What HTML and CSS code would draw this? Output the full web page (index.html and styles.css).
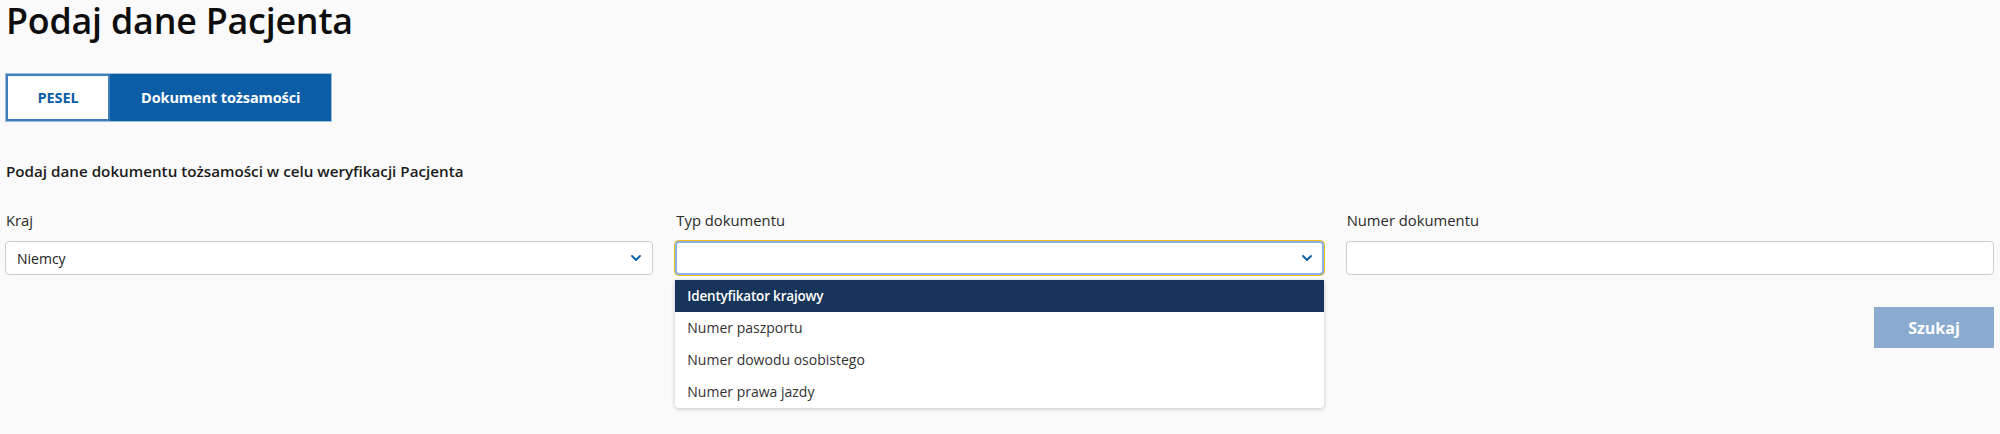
FILE: index.html
```html
<!DOCTYPE html>
<html lang="pl">
<head>
    <meta charset="UTF-8">
    <meta name="viewport" content="width=device-width, initial-scale=1.0">
    <title>Podaj dane Pacjenta</title>
    <link rel="stylesheet" href="styles.css">
</head>
<body>

    <main class="page">
        <h1 class="page-title">Podaj dane Pacjenta</h1>

        <div class="tabs">
            <button class="tab">PESEL</button>
            <button class="tab tab-active">Dokument tożsamości</button>
        </div>

        <p class="hint">Podaj dane dokumentu tożsamości w celu weryfikacji Pacjenta</p>

        <div class="fields">
            <div class="field">
                <label class="field-label">Kraj</label>
                <div class="select">
                    <span class="select-value">Niemcy</span>
                    <svg class="chevron" width="10" height="6" viewBox="0 0 10 6"><path d="M1 1l4 4 4-4" fill="none" stroke="currentColor" stroke-width="1.8" stroke-linecap="round" stroke-linejoin="round"/></svg>
                </div>
            </div>

            <div class="field">
                <label class="field-label">Typ dokumentu</label>
                <div class="select select-open">
                    <span class="select-value"></span>
                    <svg class="chevron" width="10" height="6" viewBox="0 0 10 6"><path d="M1 1l4 4 4-4" fill="none" stroke="currentColor" stroke-width="1.8" stroke-linecap="round" stroke-linejoin="round"/></svg>
                    <ul class="options">
                        <li class="option option-active">Identyfikator krajowy</li>
                        <li class="option">Numer paszportu</li>
                        <li class="option">Numer dowodu osobistego</li>
                        <li class="option">Numer prawa jazdy</li>
                    </ul>
                </div>
            </div>

            <div class="field">
                <label class="field-label" for="docNumber">Numer dokumentu</label>
                <input type="text" id="docNumber" class="text-input">
            </div>
        </div>

        <div class="actions">
            <button class="btn-search" disabled>Szukaj</button>
        </div>
    </main>

</body>
</html>
```

FILE: styles.css
```css
html, body {
    overflow: visible;
}
body {
    margin: 0;
    min-height: 434px;
    background: #fafafa;
    font-family: "Open Sans", Arial, sans-serif;
    color: #1b1b1b;
}
.page {
    min-height: 434px;
    padding: 0 6px 0 5px;
}
.page-title {
    margin: 0;
    font-size: 35.8px;
    line-height: 40px;
    font-weight: 600;
    color: #0d0d0d;
    padding-left: 1px;
    letter-spacing: -0.2px;
}
.tabs {
    display: inline-flex;
    margin-top: 33px;
    height: 49px;
    box-sizing: border-box;
    border: 1px solid #9dbddf;
    background: #0b5ea6;
}
.tab {
    font-family: inherit;
    font-size: 14.5px;
    font-weight: 700;
    border: none;
    background: none;
    color: #fff;
    padding: 0 31px;
    cursor: pointer;
    letter-spacing: -0.1px;
}
.tab:first-child {
    width: 104px;
    padding: 0;
    background: #fff;
    color: #0b5ea6;
    border: 2px solid #3f7dbd;
}
.hint {
    margin: 37px 0 0;
    font-size: 15.2px;
    line-height: 24px;
    font-weight: 600;
    padding-left: 1px;
}
.fields {
    display: grid;
    grid-template-columns: repeat(3, 1fr);
    gap: 22px;
    margin-top: 25px;
}
.field-label {
    display: block;
    font-size: 14.8px;
    line-height: 24px;
    color: #2b2b2b;
    margin-bottom: 9px;
    padding-left: 1px;
}
.select, .text-input {
    position: relative;
    display: flex;
    align-items: center;
    justify-content: space-between;
    box-sizing: border-box;
    width: 100%;
    height: 34px;
    padding: 0 11px;
    background: #fff;
    border: 1px solid #cdcdcd;
    border-radius: 4px;
    font-family: inherit;
    font-size: 14px;
}
.select-value {
    color: #222;
}
.chevron {
    color: #0b5ea6;
}
.select-open {
    border: 2px solid #8bb2e8;
    box-shadow: 0 0 0 1px #f2bd1d;
    padding: 0 10px;
}
.options {
    position: absolute;
    left: -2px;
    right: -2px;
    top: calc(100% + 7px);
    margin: 0;
    padding: 0;
    list-style: none;
    background: #fff;
    border-radius: 0 0 4px 4px;
    box-shadow: 0 1px 4px rgba(0, 0, 0, 0.22);
    z-index: 2;
}
.option {
    height: 32px;
    line-height: 32px;
    padding-left: 12px;
    font-size: 14px;
    color: #333;
}
.option-active {
    background: #17345b;
    color: #fff;
    font-weight: 600;
    font-size: 13.5px;
    letter-spacing: -0.2px;
}
.actions {
    display: flex;
    justify-content: flex-end;
    margin-top: 32px;
}
.btn-search {
    width: 120px;
    height: 41px;
    border: none;
    background: #8aabcf;
    color: #fff;
    font-family: inherit;
    font-size: 16px;
    font-weight: 700;
}
```
